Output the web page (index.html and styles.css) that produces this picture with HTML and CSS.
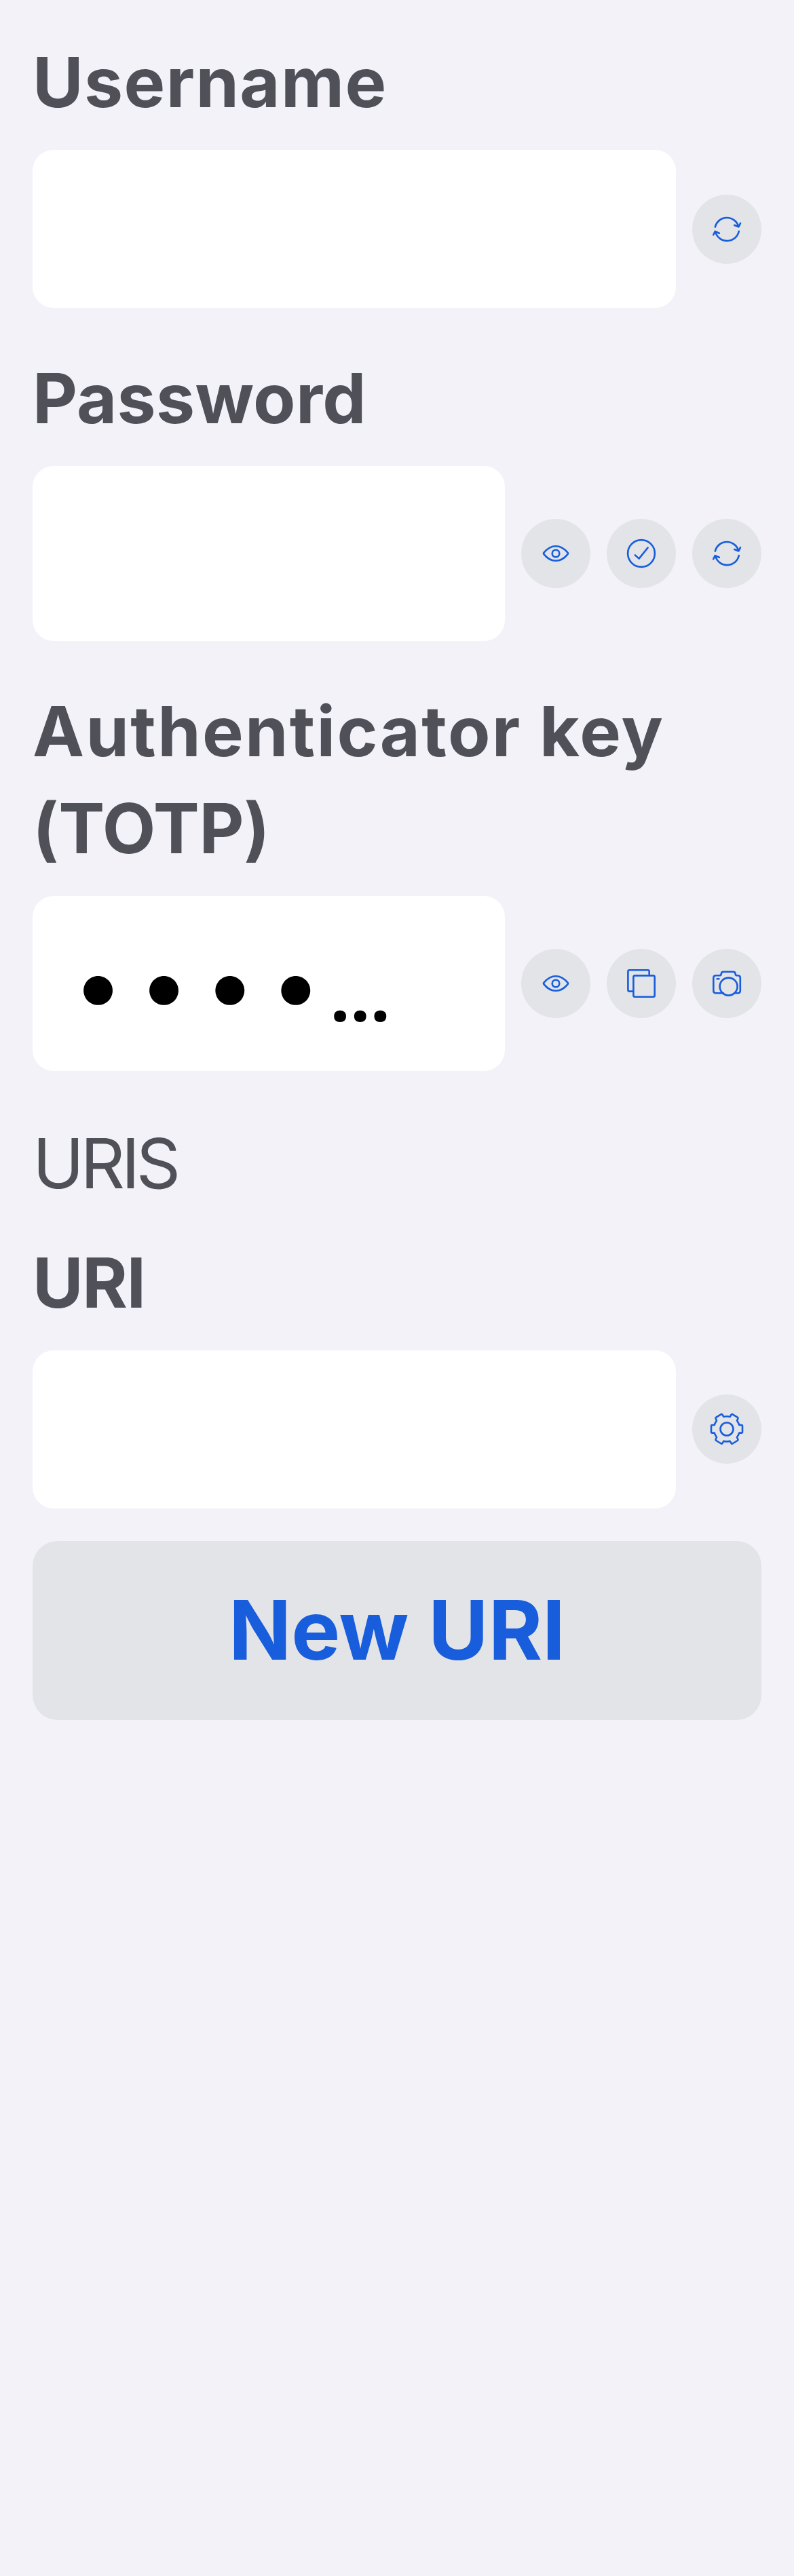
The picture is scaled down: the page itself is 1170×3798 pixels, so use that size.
FILE: index.html
```html
<!DOCTYPE html>
<html lang="en">
<head>
<meta charset="utf-8">
<title>Edit login</title>
<link rel="stylesheet" href="styles.css">
</head>
<body>
<svg class="sprite" aria-hidden="true">
  <symbol id="refresh" viewBox="0 0 102 102">
    <path d="M33.8 47.6A17.8 17.8 0 0 1 68.3 47.2M62.2 45L68.4 47.5L71 42.2M68.8 54A17.8 17.8 0 0 1 34.2 55M31.2 59.3L33.6 54.2L39.8 56.8"/>
  </symbol>
  <symbol id="eye" viewBox="0 0 102 102">
    <path d="M33.6 52.3Q32.4 51 33.6 49.7Q41.5 40.3 51 40.3T68.4 49.7Q69.6 51 68.4 52.3Q60.5 61.8 51 61.8T33.6 52.3Z"/>
    <circle cx="51" cy="51" r="5.3"/>
  </symbol>
  <symbol id="check" viewBox="0 0 102 102">
    <circle cx="51" cy="51" r="19.9"/>
    <path d="M41.8 53.4L47.6 58.6L60.6 42.5"/>
  </symbol>
  <symbol id="copy" viewBox="0 0 102 102">
    <path d="M62.7 39V33.4Q62.7 31.3 60.6 31.3H33.5Q31.4 31.3 31.4 33.4V60.5Q31.4 62.6 33.5 62.6H39"/>
    <rect x="39.4" y="39.4" width="31.3" height="31.3" rx="2.2"/>
  </symbol>
  <symbol id="camera" viewBox="0 0 102 102">
    <path d="M46 65.3H35Q31.3 65.3 31.3 61.8V42.8Q31.3 39.3 35 39.3H39.6Q42.8 39.3 42.8 36.9Q42.8 33.8 46.2 33.8H60.2Q63.6 33.8 63.6 36.9Q63.6 39.3 66.8 39.3H67.3Q70.8 39.3 70.8 42.8V61.8Q70.8 65.3 67.3 65.3H62M36.6 44.3H39.4"/>
    <circle cx="53.6" cy="55.6" r="13"/>
  </symbol>
  <symbol id="gear" viewBox="0 0 102 102">
    <circle cx="51" cy="51" r="9.5"/>
    <path d="M72.6 45H69.3Q68.2 41.7 66 38.6L67.5 35.2Q67.6 34.2 66.7 33.6L59.2 29.1Q58.3 28.8 57.7 29.5L55.7 32.8Q51 31.8 46.3 32.8L44.3 29.5Q43.7 28.8 42.8 29.1L35.3 33.6Q34.4 34.2 34.5 35.2L36 38.6Q33.8 41.7 32.7 45H29.4Q28 45 28 46.4V55.2Q28 56.6 29.4 56.6H32.7Q33.8 60 36 63L34.5 66.4Q34.4 67.4 35.3 68L42.8 72.5Q43.7 72.8 44.3 72.1L46.3 68.9Q51 69.8 55.7 68.9L57.7 72.1Q58.3 72.8 59.2 72.5L66.7 68Q67.6 67.4 67.5 66.4L66 63Q68.2 60 69.3 56.6H72.6Q74 56.6 74 55.2V46.4Q74 45 72.6 45Z"/>
  </symbol>
</svg>
<main class="form">
  <section class="item">
    <h2 class="label label-username">Username</h2>
    <div class="row">
      <div class="field"></div>
      <button class="icon-button" aria-label="Generate username"><svg class="icon"><use href="#refresh"/></svg></button>
    </div>
  </section>
  <section class="item">
    <h2 class="label label-password">Password</h2>
    <div class="row">
      <div class="field field-tall"></div>
      <button class="icon-button" aria-label="Show password"><svg class="icon"><use href="#eye"/></svg></button>
      <button class="icon-button" aria-label="Check password"><svg class="icon"><use href="#check"/></svg></button>
      <button class="icon-button" aria-label="Generate password"><svg class="icon"><use href="#refresh"/></svg></button>
    </div>
  </section>
  <section class="item">
    <h2 class="label label-totp">Authenticator key <span class="label-totp-short">(TOTP)</span></h2>
    <div class="row">
      <div class="field field-tall field-secret"><span class="bullets">••••</span><span class="ellipsis">…</span></div>
      <button class="icon-button" aria-label="Show key"><svg class="icon"><use href="#eye"/></svg></button>
      <button class="icon-button" aria-label="Copy key"><svg class="icon"><use href="#copy"/></svg></button>
      <button class="icon-button" aria-label="Scan key"><svg class="icon"><use href="#camera"/></svg></button>
    </div>
  </section>
  <h1 class="section-title">URIS</h1>
  <section class="item">
    <h2 class="label label-uri">URI</h2>
    <div class="row">
      <div class="field"></div>
      <button class="icon-button" aria-label="URI options"><svg class="icon"><use href="#gear"/></svg></button>
    </div>
  </section>
  <button class="new-uri">New URI</button>
</main>
</body>
</html>
```
FILE: styles.css
```css
* {
  box-sizing: border-box;
}

body {
  margin: 0;
  min-height: 3798px;
  background: #f3f2f8;
  color: #505059;
  font-family: Inter, "Liberation Sans", sans-serif;
}

.sprite {
  display: none;
}

.form {
  display: flex;
  flex-direction: column;
  padding: 50px 48px 0;
}

.item {
  margin-bottom: 62px;
}

.label {
  margin: 0 0 28.5px;
  font-size: 102px;
  font-weight: 700;
  line-height: 142.5px;
}

.label-username {
  letter-spacing: 1.4px;
}

.label-password {
  letter-spacing: 0.3px;
}

.label-totp {
  letter-spacing: 2.3px;
}

.label-totp-short {
  letter-spacing: -0.3px;
}

.label-uri {
  letter-spacing: -1.6px;
}

.section-title {
  margin: 3px 0 33.5px;
  font-size: 102px;
  font-weight: 400;
  line-height: 142.5px;
  letter-spacing: -5.4px;
}

.row {
  display: flex;
  align-items: center;
  gap: 24px;
}

.field {
  flex: 1;
  height: 233px;
  border-radius: 31px;
  background: #fff;
}

.field-tall {
  height: 258px;
}

.field-secret {
  padding: 48px 0 0 58px;
  color: #000;
  line-height: 162px;
  white-space: nowrap;
}

.bullets {
  font-size: 137px;
  letter-spacing: 20px;
  vertical-align: 6px;
}

.ellipsis {
  margin-left: -8px;
  font-family: "Open Sans", sans-serif;
  font-size: 104px;
  font-weight: 700;
}

.icon-button {
  flex: none;
  width: 102px;
  height: 102px;
  padding: 0;
  border: 0;
  border-radius: 50%;
  background: #e2e4e8;
  color: #175ddc;
}

.icon {
  display: block;
  width: 102px;
  height: 102px;
  fill: none;
  stroke: currentColor;
  stroke-width: 2.6;
  stroke-linecap: round;
  stroke-linejoin: round;
}

.new-uri {
  height: 264px;
  margin-top: -14px;
  padding: 0 0 2px;
  border: 0;
  border-radius: 37px;
  background: #e2e4e8;
  color: #175ddc;
  font-family: inherit;
  font-size: 121px;
  font-weight: 700;
  line-height: 168px;
}
```
